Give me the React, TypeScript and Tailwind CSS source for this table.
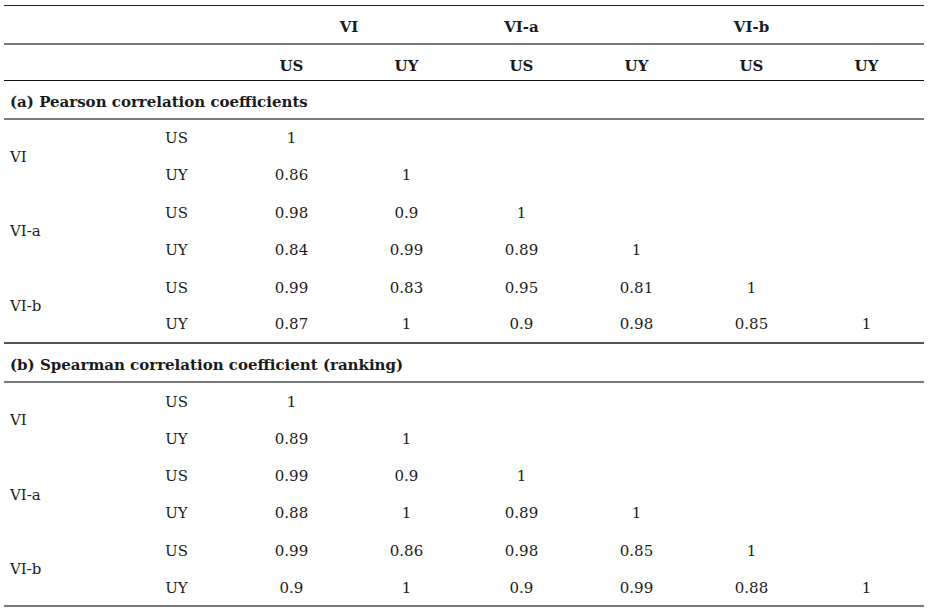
const cols = ["US", "UY", "US", "UY", "US", "UY"];

type Section = {
  title: string;
  groups: { name: string; rows: { sub: string; values: string[] }[] }[];
};

const sections: Section[] = [
  {
    title: "(a) Pearson correlation coefficients",
    groups: [
      {
        name: "VI",
        rows: [
          { sub: "US", values: ["1"] },
          { sub: "UY", values: ["0.86", "1"] },
        ],
      },
      {
        name: "VI-a",
        rows: [
          { sub: "US", values: ["0.98", "0.9", "1"] },
          { sub: "UY", values: ["0.84", "0.99", "0.89", "1"] },
        ],
      },
      {
        name: "VI-b",
        rows: [
          { sub: "US", values: ["0.99", "0.83", "0.95", "0.81", "1"] },
          { sub: "UY", values: ["0.87", "1", "0.9", "0.98", "0.85", "1"] },
        ],
      },
    ],
  },
  {
    title: "(b) Spearman correlation coefficient (ranking)",
    groups: [
      {
        name: "VI",
        rows: [
          { sub: "US", values: ["1"] },
          { sub: "UY", values: ["0.89", "1"] },
        ],
      },
      {
        name: "VI-a",
        rows: [
          { sub: "US", values: ["0.99", "0.9", "1"] },
          { sub: "UY", values: ["0.88", "1", "0.89", "1"] },
        ],
      },
      {
        name: "VI-b",
        rows: [
          { sub: "US", values: ["0.99", "0.86", "0.98", "0.85", "1"] },
          { sub: "UY", values: ["0.9", "1", "0.9", "0.99", "0.88", "1"] },
        ],
      },
    ],
  },
];

export default function App() {
  return (
    <div className="bg-white w-[928px] h-[609px] pt-[5px] pl-[4px] font-['DejaVu_Serif',serif] text-[15px] text-[#1b1b1b]">
      <table className="w-[920px] table-fixed border-collapse">
        <colgroup>
          {Array.from({ length: 8 }).map((_, i) => (
            <col key={i} className="w-[115px]" />
          ))}
        </colgroup>
        <thead>
          <tr className="h-[38px] border-t border-[#222] border-b-2 border-b-[#7a7a7a]">
            <th colSpan={2} />
            <th colSpan={2} className="font-bold text-center pt-[6px]">VI</th>
            <th className="font-bold text-center pt-[6px]">VI-a</th>
            <th />
            <th className="font-bold text-center pt-[6px]">VI-b</th>
            <th />
          </tr>
          <tr className="h-[37px] border-b border-[#111]">
            <th colSpan={2} />
            {cols.map((c, i) => (
              <th key={i} className="font-bold text-center pt-[7px]">
                {c}
              </th>
            ))}
          </tr>
        </thead>
        {sections.map((s, si) => (
          <tbody key={si}>
            <tr
              className={
                si === 0
                  ? "h-[38px] border-b-2 border-[#7a7a7a]"
                  : "h-[39px] border-t-2 border-[#555] border-b-2 border-b-[#7a7a7a]"
              }
            >
              <td colSpan={8} className="font-bold pl-[6px] pt-[6px] align-middle">
                {s.title}
              </td>
            </tr>
            {s.groups.map((g) =>
              g.rows.map((r, ri) => (
                <tr key={g.name + r.sub} className="h-[37.4px]">
                  {ri === 0 && (
                    <td rowSpan={2} className="pl-[6px] pt-[2px] align-middle">
                      {g.name}
                    </td>
                  )}
                  <td className="text-center pt-[2px]">{r.sub}</td>
                  {Array.from({ length: 6 }).map((_, vi) => (
                    <td key={vi} className="text-center pt-[2px]">
                      {r.values[vi] ?? ""}
                    </td>
                  ))}
                </tr>
              ))
            )}
          </tbody>
        ))}
        <tfoot>
          <tr className="border-t-2 border-[#7a7a7a]">
            <td colSpan={8} />
          </tr>
        </tfoot>
      </table>
    </div>
  );
}
